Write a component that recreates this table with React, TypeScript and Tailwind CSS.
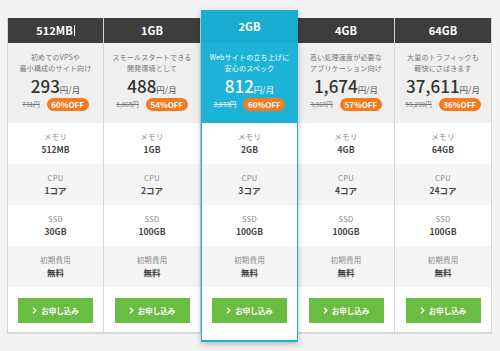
const font = { fontFamily: '"Noto Sans CJK JP", "Noto Sans", sans-serif' };

type Plan = {
  name: string;
  desc: [string, string];
  price: string;
  was: string;
  off: string;
  memory: string;
  cpu: string;
  ssd: string;
};

const plans: Plan[] = [
  { name: "512MB", desc: ["初めてのVPSや", "最小構成のサイト向け"], price: "293", was: "731円", off: "60%OFF", memory: "512MB", cpu: "1コア", ssd: "30GB" },
  { name: "1GB", desc: ["スモールスタートできる", "開発環境として"], price: "488", was: "1,065円", off: "54%OFF", memory: "1GB", cpu: "2コア", ssd: "100GB" },
  { name: "2GB", desc: ["Webサイトの立ち上げに", "安心のスペック"], price: "812", was: "2,033円", off: "60%OFF", memory: "2GB", cpu: "3コア", ssd: "100GB" },
  { name: "4GB", desc: ["高い処理速度が必要な", "アプリケーション向け"], price: "1,674", was: "3,969円", off: "57%OFF", memory: "4GB", cpu: "4コア", ssd: "100GB" },
  { name: "64GB", desc: ["大量のトラフィックも", "軽快にさばきます"], price: "37,611", was: "59,290円", off: "36%OFF", memory: "64GB", cpu: "24コア", ssd: "100GB" },
];

function SpecRow({ label, value, gray }: { label: string; value: string; gray?: boolean }) {
  return (
    <div
      className={`flex h-[41px] flex-col items-center justify-center ${gray ? "bg-[#f5f5f5]" : "bg-white"}`}
    >
      <span className="text-[7.5px] leading-[12px] tracking-[0.3px] text-[#888]">{label}</span>
      <span className="text-[8.5px] font-bold leading-[13px] text-[#444]">{value}</span>
    </div>
  );
}

function Column({ plan, featured, first }: { plan: Plan; featured?: boolean; first?: boolean }) {
  const light = featured ? "text-white" : "text-[#777]";
  return (
    <div
      className={
        featured
          ? "relative z-10 mt-[10px] flex w-[97px] flex-col border-b-2 border-[#1ab0d4] shadow-[0_2px_6px_rgba(0,0,0,0.25)]"
          : `mt-[18px] flex w-[97px] flex-col border-b-2 border-r border-[#d6d6d6] ${first ? "border-l" : ""}`
      }
    >
      <div
        className={`flex items-center justify-center text-[11px] font-bold text-white ${
          featured ? "h-[33px] bg-[#18acd0]" : "h-[25px] bg-[#3d3d3d]"
        }`}
      >
        {plan.name}
        {first && <span className="ml-[1px] inline-block h-[11px] w-px bg-white" />}
      </div>
      <div
        className={`flex h-[80px] flex-col items-center pt-[9px] ${featured ? "bg-[#1cb3d7]" : "bg-[#efefef]"}`}
      >
        <span className={`text-[7px] leading-[11px] tracking-[0.2px] ${light}`}>{plan.desc[0]}</span>
        <span className={`text-[7px] leading-[11px] tracking-[0.2px] ${light}`}>{plan.desc[1]}</span>
        <div className="mt-[1px] flex items-baseline">
          <span className={`text-[17px] font-medium leading-[22px] ${featured ? "text-white" : "text-[#333]"}`}>
            {plan.price}
          </span>
          <span className={`text-[8.5px] ${featured ? "text-white" : "text-[#555]"}`}>円/月</span>
        </div>
        <div className="mt-[1px] flex items-center gap-[7px]">
          <span className={`text-[6.5px] line-through ${featured ? "text-white" : "text-[#777]"}`}>{plan.was}</span>
          <span className="flex h-[13px] w-[42px] items-center justify-center rounded-full bg-[#f37a1f] text-[8px] font-bold text-white">
            {plan.off}
          </span>
        </div>
      </div>
      <div className={featured ? "border-x border-[#1ab0d4]" : ""}>
        <SpecRow label="メモリ" value={plan.memory} />
        <SpecRow label="CPU" value={plan.cpu} gray />
        <SpecRow label="SSD" value={plan.ssd} />
        <SpecRow label="初期費用" value="無料" gray />
        <div className={`flex flex-col items-center bg-white pt-[11px] ${featured ? "h-[53px]" : "h-[45px]"}`}>
          <button className="flex h-[25px] w-[75px] items-center justify-center gap-[4px] bg-[#6abd42] text-[7.5px] font-bold text-white">
            <svg width="5" height="7" viewBox="0 0 5 7" fill="none" stroke="white" strokeWidth="1.4">
              <path d="M1 0.8 L3.8 3.5 L1 6.2" />
            </svg>
            お申し込み
          </button>
        </div>
      </div>
    </div>
  );
}

export default function App() {
  return (
    <div className="h-[351px] w-[500px] overflow-hidden bg-[#f3f3f3] pl-[7px]" style={font}>
      <div className="flex items-start">
        {plans.map((p, i) => (
          <Column key={p.name} plan={p} featured={i === 2} first={i === 0} />
        ))}
      </div>
    </div>
  );
}
